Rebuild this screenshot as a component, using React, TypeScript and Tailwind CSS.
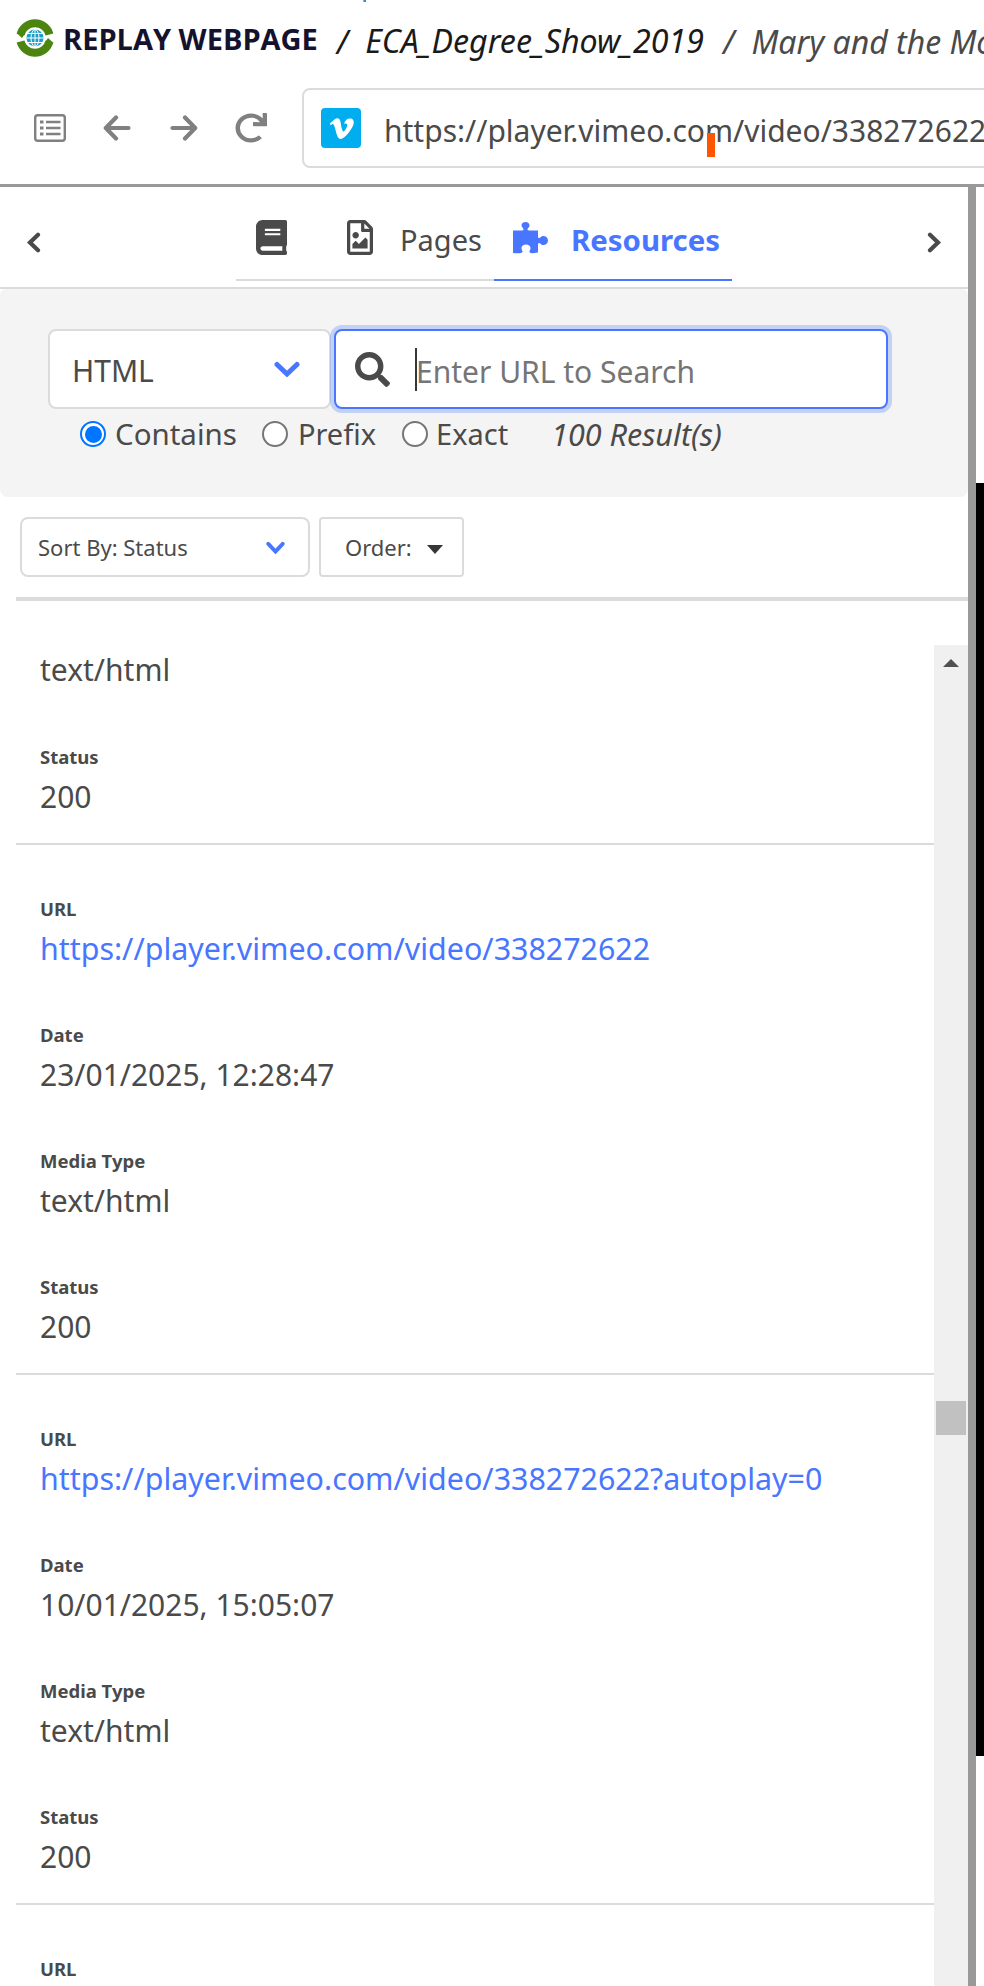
import React from "react";

function Field({ label, value, link }: { label: string; value: string; link?: boolean }) {
  return (
    <div className="h-[126px] pt-[29px] pl-[24px]">
      <div className="text-[18.5px] leading-[24px] font-bold text-[#4a4a4a]">{label}</div>
      <div className={`mt-[7px] leading-[42px] whitespace-nowrap ${link ? "text-[30.4px] text-[#4876ff]" : "text-[30px] text-[#4a4a4a]"}`}>{value}</div>
    </div>
  );
}

function ChevronSide({ dir }: { dir: "l" | "r" }) {
  return (
    <svg viewBox="0 0 15 21" className="w-[15px] h-[21px] text-[#4a4a4a]" fill="none" stroke="currentColor" strokeWidth="4.200" strokeLinecap="round" strokeLinejoin="miter">
      <path d={dir === "l" ? "M12 2.800 L4 10.500 L12 18.200" : "M3 2.800 L11 10.500 L3 18.200"} />
    </svg>
  );
}

function ChevronDown({ className }: { className: string }) {
  return (
    <svg viewBox="0 0 26 16" className={className} fill="none" stroke="#4876ff" strokeWidth="5" strokeLinecap="round" strokeLinejoin="miter" preserveAspectRatio="none">
      <path d="M3 3.500 L13 13 L23 3.500" />
    </svg>
  );
}

function Logo() {
  return (
    <svg viewBox="0 0 38 38" className="w-[38px] h-[38px] shrink-0 mb-[12px]">
      <path d="M4.500 15.500 A15 15 0 0 1 33.500 15.500" fill="none" stroke="#4c8410" strokeWidth="8" />
      <path d="M33.500 22.500 A15 15 0 0 1 4.500 22.500" fill="none" stroke="#4c8410" strokeWidth="8" />
      <path d="M0.500 14 L9.500 14 L6 19 Z M37.500 24 L28.500 24 L32 19 Z" fill="#4c8410" />
      <circle cx="19" cy="19" r="8.500" fill="#1b9fc9" />
      <path d="M10.500 19 H27.500 M19 10.500 V27.500 M12 14.500 H26 M12 23.500 H26" stroke="#fff" strokeWidth="1" />
      <ellipse cx="19" cy="19" rx="4" ry="8.500" fill="none" stroke="#fff" strokeWidth="1" />
    </svg>
  );
}

function Vimeo() {
  return (
    <div className="w-[40px] h-[40px] rounded-[4px] bg-[#00adef] flex items-center justify-center shrink-0">
      <svg viewBox="0 0 24 24" className="w-[27px] h-[27px]" fill="#fff">
        <path d="M22.9 6.9c-.1 2.1-1.6 5-4.4 8.7-2.9 3.8-5.4 5.7-7.4 5.7-1.3 0-2.3-1.2-3.2-3.5L6.2 11.500c-.6-2.300-1.300-3.500-2-3.500-.2 0-.7.3-1.700 1L1.500 7.700C2.600 6.800 3.600 5.800 4.700 4.900c1.500-1.300 2.600-2 3.300-2 1.700-.2 2.800 1 3.200 3.500.4 2.700.7 4.400.9 5 .5 2.200 1 3.300 1.600 3.300.5 0 1.100-.7 2-2.100.9-1.400 1.400-2.500 1.400-3.200.1-1.200-.4-1.800-1.400-1.800-.5 0-1 .1-1.500.3 1-3.300 2.900-4.900 5.700-4.800 2.100.1 3.100 1.400 3 3.800z" />
      </svg>
    </div>
  );
}

const Book = () => (
  <svg viewBox="0 0 448 512" className="w-[31px] h-[35px]" fill="#4a4a4a" preserveAspectRatio="none">
    <path d="M448 360V24c0-13.300-10.700-24-24-24H96C43 0 0 43 0 96v320c0 53 43 96 96 96h328c13.300 0 24-10.700 24-24v-16c0-7.500-3.500-14.300-8.900-18.700-4.200-15.400-4.200-59.300 0-74.700 5.400-4.300 8.900-11.100 8.900-18.600zM128 134c0-3.300 2.700-6 6-6h212c3.300 0 6 2.700 6 6v20c0 3.300-2.700 6-6 6H134c-3.300 0-6-2.700-6-6v-20zm0 64c0-3.300 2.700-6 6-6h212c3.300 0 6 2.700 6 6v20c0 3.300-2.700 6-6 6H134c-3.300 0-6-2.700-6-6v-20zm253.400 250H96c-17.700 0-32-14.300-32-32 0-17.600 14.400-32 32-32h285.400c-1.900 17.100-1.900 46.900 0 64z" />
  </svg>
);

const FileImage = () => (
  <svg viewBox="0 0 384 512" className="w-[26px] h-[35px]" fill="#4a4a4a" preserveAspectRatio="none">
    <path d="M369.900 97.900L286 14C277 5 264.800-.1 252.100-.1H48C21.500 0 0 21.500 0 48v416c0 26.500 21.500 48 48 48h288c26.500 0 48-21.500 48-48V131.900c0-12.700-5.100-25-14.100-34zM332.100 128H256V51.900l76.100 76.100zM48 464V48h160v104c0 13.300 10.700 24 24 24h104v288H48zm32-48h224V288l-23.500-23.500c-4.700-4.700-12.300-4.700-17 0L176 352l-39.500-39.500c-4.700-4.700-12.300-4.700-17 0L80 352v64zm48-240c-26.500 0-48 21.500-48 48s21.500 48 48 48 48-21.500 48-48-21.500-48-48-48z" />
  </svg>
);

const Puzzle = () => (
  <svg viewBox="0 0 36 32" className="w-[36px] h-[32px]" fill="#4876ff">
    <path d="M0 8.500 H9 C10.500 8.500 11 7.500 10 6.200 C9 5 8.500 4.200 8.500 3.500 C8.500 1.500 10.200 0 12.500 0 C14.800 0 16.500 1.500 16.500 3.500 C16.500 4.500 16 5.200 15 6.200 C14 7.500 14.500 8.500 16 8.500 H25 V14.500 C25 16 26 16.500 27.200 15.500 C28.300 14.500 29.200 14 30.200 14 C33 14 35 15.800 35 18.500 C35 21.200 33 23 30.200 23 C29.200 23 28.300 22.500 27.200 21.500 C26 20.500 25 21 25 22.500 V30.500 C18 31.500 17.500 31.500 16.500 30 C16 29 17.500 28.500 17.500 26 C17.500 24 15.500 22.500 13 22.500 C10.500 22.500 8.500 24 8.500 26 C8.500 28.500 10 29 9.500 30 C9 31.500 4 31.500 0 31 Z" />
  </svg>
);

const SearchIcon = () => (
  <svg viewBox="0 0 512 512" className="w-[35px] h-[35px] shrink-0" fill="#4a4a4a">
    <path d="M505 442.700L405.300 343c-4.500-4.500-10.600-7-17-7H372c27.600-35.300 44-79.700 44-128C416 93.100 322.900 0 208 0S0 93.100 0 208s93.100 208 208 208c48.300 0 92.700-16.400 128-44v16.300c0 6.400 2.500 12.500 7 17l99.700 99.700c9.400 9.400 24.600 9.400 33.900 0l28.300-28.300c9.400-9.400 9.400-24.600.1-34zM208 336c-70.700 0-128-57.200-128-128 0-70.700 57.200-128 128-128 70.700 0 128 57.200 128 128 0 70.700-57.200 128-128 128z" />
  </svg>
);

const ListIcon = () => (
  <svg viewBox="0 0 32 28" className="w-[32px] h-[28px] shrink-0" fill="none">
    <rect x="1.200" y="1.200" width="29.600" height="25.600" rx="2.500" stroke="#808080" strokeWidth="2.400" />
    <path d="M6 8h3.500M6 14h3.500M6 20h3.500" stroke="#808080" strokeWidth="3" />
    <path d="M12 8h14.500M12 14h14.500M12 20h14.500" stroke="#808080" strokeWidth="2.400" />
  </svg>
);

const Arrow = ({ flip }: { flip?: boolean }) => (
  <svg viewBox="0 0 28 28" className={`w-[28px] h-[28px] shrink-0 ${flip ? "-scale-x-100" : ""}`} fill="none" stroke="#808080" strokeWidth="4.200" strokeLinecap="round" strokeLinejoin="round">
    <path d="M25.500 14H4M13 3.500L2.800 14L13 24.500" />
  </svg>
);

const Reload = () => (
  <svg viewBox="0 0 512 512" className="w-[32px] h-[30px] shrink-0" fill="#808080" preserveAspectRatio="none">
    <path d="M500.300 0h-47.400a12 12 0 0 0-12 12.570l4 82.760A247.420 247.420 0 0 0 256 8C119.340 8 7.900 119.530 8 256.190 8.100 393.070 119.100 504 256 504a247.100 247.100 0 0 0 166.180-63.910 12 12 0 0 0 .480-17.430l-34-34a12 12 0 0 0-16.380-.550A176 176 0 1 1 402.100 157.800l-101.530-4.870a12 12 0 0 0-12.570 12v47.410a12 12 0 0 0 12 12h200.330a12 12 0 0 0 12-12V12a12 12 0 0 0-12-12z" />
  </svg>
);

function Record({ url, date }: { url: string; date: string }) {
  return (
    <div className="border-b-2 border-[#dbdbdb] pt-[23px] pb-[1px]">
      <Field label="URL" value={url} link />
      <Field label="Date" value={date} />
      <Field label="Media Type" value="text/html" />
      <Field label="Status" value="200" />
    </div>
  );
}

function Radio({ on, className }: { on?: boolean; className?: string }) {
  return (
    <div className={`w-[26px] h-[26px] shrink-0 rounded-full border-2 flex items-center justify-center ${on ? "border-[#0075ff] bg-white" : "border-[#767676] bg-white"} ${className ?? ""}`}>
      {on ? <div className="w-[17px] h-[17px] rounded-full bg-[#0075ff]" /> : null}
    </div>
  );
}

export default function App() {
  return (
    <div className="relative w-[984px] h-[1986px] overflow-hidden bg-white text-[#4a4a4a]" style={{ fontFamily: '"Noto Sans", "Open Sans", sans-serif' }}>
      <div className="absolute left-[363px] top-0 flex">
        <div className="w-[1px] h-[2px] bg-[#f0a040]" />
        <div className="w-[2px] h-[2px] bg-[#2a8fd0]" />
      </div>
      <div className="h-[184px] box-content border-b-[3px] border-[#999] flex flex-col">
        <div className="h-[88px] shrink-0 pl-[16px] flex items-center whitespace-nowrap">
          <Logo />
          <span className="ml-[9px] mb-[10px] text-[29px] font-bold text-[#14122f]" style={{ fontFamily: '"Open Sans", sans-serif' }}>REPLAY WEBPAGE</span>
          <span className="ml-[19px] mb-[5px] italic text-[32px] text-[#1a1a1a]">/</span>
          <span className="ml-[17px] mb-[5px] italic text-[32.200px] text-[#1a1a1a]">ECA_Degree_Show_2019</span>
          <span className="ml-[19px] mb-[5px] italic text-[32px] text-[#4a4a4a]">/</span>
          <span className="ml-[17px] mb-[5px] italic text-[32px] text-[#4a4a4a]">Mary and the Moon</span>
        </div>
        <div className="flex items-center pl-[34px]">
          <ListIcon />
          <div className="ml-[37px]"><Arrow /></div>
          <div className="ml-[39px]"><Arrow flip /></div>
          <div className="ml-[37px]"><Reload /></div>
          <div className="relative ml-[35px] h-[80px] w-[800px] shrink-0 rounded-[8px] border-2 border-[#dbdbdb] flex items-center pl-[17px]">
            <Vimeo />
            <span className="ml-[23px] mt-[4px] text-[30px] text-[#4a4a4a] whitespace-nowrap">https://player.vimeo.com/video/338272622</span>
            <div className="absolute left-[403px] top-[43px] w-[8px] h-[24px] bg-[#ff5500]" />
          </div>
        </div>
      </div>

      <div className="relative w-[968px] bg-white">
        <div className="h-[102px] flex items-start border-b-2 border-[#dbdbdb]">
          <div className="w-[236px] pl-[26px] pt-[45px]"><ChevronSide dir="l" /></div>
          <div className="w-[258px] h-[94px] border-b-2 border-[#dbdbdb] flex items-start pt-[33px]">
            <div className="ml-[20px]"><Book /></div>
            <div className="ml-[60px]"><FileImage /></div>
            <span className="ml-[27px] text-[29px] leading-[40px] text-[#4a4a4a]">Pages</span>
          </div>
          <div className="w-[238px] h-[94px] border-b-2 border-[#4876ff] flex items-start pt-[35px]">
            <div className="ml-[19px]"><Puzzle /></div>
            <span className="-mt-[2px] ml-[22px] text-[29.400px] leading-[40px] font-bold text-[#4876ff]">Resources</span>
          </div>
          <div className="flex-1 flex justify-end pr-[26px] pt-[45px]"><ChevronSide dir="r" /></div>
        </div>

        <div className="h-[208px] bg-[#f4f4f4] rounded-b-[8px] rounded-t-[6px] pt-[40px]">
          <div className="flex pl-[48px]">
            <div className="w-[283px] h-[80px] bg-white border-2 border-[#dbdbdb] rounded-[8px] flex items-center pl-[22px] justify-between pr-[29px]">
              <span className="mt-[2px] text-[30px] text-[#4a4a4a]">HTML</span>
              <ChevronDown className="w-[26px] h-[16px]" />
            </div>
            <div className="ml-[3px] w-[554px] h-[80px] bg-white border-2 border-[#4876ff] rounded-[8px] shadow-[0_0_0_4px_rgba(72,118,255,0.28)] flex items-center pl-[19px]">
              <SearchIcon />
              <div className="ml-[25px] w-[2px] h-[43px] bg-[#363636] shrink-0" />
              <span className="-ml-[1px] mt-[4px] text-[30px] text-[#757575] whitespace-nowrap">Enter URL to Search</span>
            </div>
          </div>
          <div className="flex items-center pl-[80px] text-[29px] leading-[50px] whitespace-nowrap">
            <Radio on />
            <span className="ml-[9px] text-[29.500px]">Contains</span>
            <Radio className="ml-[25px]" />
            <span className="ml-[10px]">Prefix</span>
            <Radio className="ml-[26px]" />
            <span className="ml-[8px]">Exact</span>
            <span className="ml-[43px] italic text-[30.500px]">100 Result(s)</span>
          </div>
        </div>

        <div className="flex pl-[20px] pt-[20px]">
          <div className="w-[290px] h-[60px] border-2 border-[#dbdbdb] rounded-[8px] flex items-center justify-between pl-[16px] pr-[23px]">
            <span className="text-[22px] text-[#4a4a4a]">Sort By: Status</span>
            <ChevronDown className="w-[19px] h-[13px]" />
          </div>
          <div className="ml-[9px] w-[145px] h-[60px] border-2 border-[#dbdbdb] rounded-[4px] flex items-center pl-[24px]">
            <span className="text-[22px] text-[#4a4a4a]">Order:</span>
            <div className="ml-[15px] mt-[4px] w-0 h-0 border-x-[8px] border-x-transparent border-t-[9px] border-t-[#363636]" />
          </div>
        </div>

        <div className="mt-[20px] ml-[16px] border-t-4 border-[#dbdbdb] flex">
          <div className="flex-1 min-w-0">
            <div className="h-[244px] border-b-2 border-[#dbdbdb] pl-[24px]">
              <div className="pt-[48px] text-[30px] leading-[42px]">text/html</div>
              <div className="mt-[54px] font-bold text-[18.5px] leading-[24px]">Status</div>
              <div className="mt-[7px] text-[30px] leading-[42px]">200</div>
            </div>
            <Record url="https://player.vimeo.com/video/338272622" date="23/01/2025, 12:28:47" />
            <Record url="https://player.vimeo.com/video/338272622?autoplay=0" date="10/01/2025, 15:05:07" />
            <div className="pt-[23px]"><Field label="URL" value="" /></div>
          </div>
          <div className="w-[34px] mt-[44px] bg-[#f0f0f0] flex flex-col items-center relative shrink-0">
            <div className="mt-[14px] w-0 h-0 border-x-[8px] border-x-transparent border-b-[8px] border-b-[#505050]" />
            <div className="absolute top-[756px] left-[2px] w-[30px] h-[34px] bg-[#c1c1c1]" />
          </div>
        </div>
      </div>

      <div className="absolute left-[968px] top-[187px] bottom-0 w-[8px] bg-[#999]" />
      <div className="absolute left-[976px] top-[483px] h-[1273px] w-[8px] bg-black" />
    </div>
  );
}
